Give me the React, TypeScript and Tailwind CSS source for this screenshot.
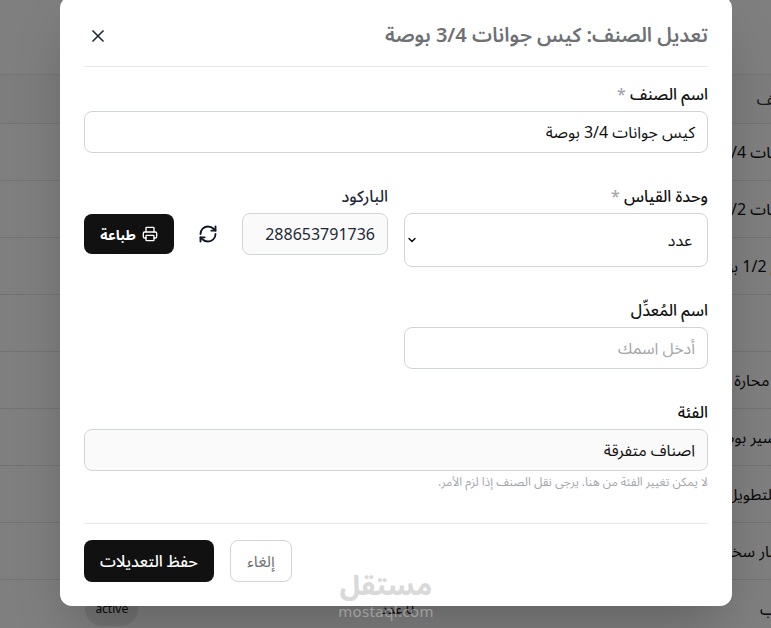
import { X, RefreshCw, Printer, ChevronDown } from "lucide-react";

const rows = [
  { name: "كيس جوانات 3/4 بوصة", mr: "mr-[-62px]" },
  { name: "كيس جوانات 1/2 بوصة", mr: "mr-[-62px]" },
  { name: "كوع 1/2 بوصة", mr: "mr-[-22px]" },
  { name: "", mr: "" },
  { name: "مسطرة محارة 1 متر", mr: "mr-[-48px]" },
  { name: "مواسير بوصة", mr: "mr-[-24px]" },
  { name: "وصلة للتطويل", mr: "mr-[-44px]" },
  { name: "مسمار سخن", mr: "mr-[-30px]" },
];

function Req({ children }: { children: string }) {
  return (
    <label className="mb-[6px] block text-[16px] leading-[22px] font-medium text-[#111111]">
      {children} <span className="text-[#a3a6ab]">*</span>
    </label>
  );
}

export default function App() {
  return (
    <div dir="rtl" className="relative h-[628px] w-[771px] overflow-hidden bg-white font-['Noto_Sans','Noto_Sans_Arabic','DejaVu_Sans',sans-serif]">
      {/* table behind the dialog */}
      <div className="pt-[74px]">
        <div className="flex h-[50px] items-center border-y border-[#e5e7eb] bg-[#fafafa] text-[16px] text-[#333]">
          <span className="mr-[-32px]">الصنف</span>
        </div>
        {rows.map((r, i) => (
          <div key={i} className="flex h-[57px] items-center border-b border-[#e5e7eb] text-[16px] whitespace-nowrap text-[#111111]">
            <span className={r.mr}>{r.name}</span>
          </div>
        ))}
        <div className="flex h-[57px] items-center text-[14px] text-[#111111]">
          <span className="mr-[-5px] w-[10px] text-[16px]">ب</span>
          <span className="mr-[352px]">0 عدد</span>
          <span className="mr-[243px] rounded-full bg-[#e8e8e8] px-[10px] py-[8px] text-[12px] leading-[18px]">active</span>
        </div>
      </div>

      {/* overlay */}
      <div className="absolute inset-0 bg-black/50" />

      {/* dialog */}
      <div className="absolute top-[-4px] left-[60px] h-[610px] w-[672px] rounded-xl bg-white px-[24px] shadow-2xl">
        <div className="flex h-[71px] items-center justify-between border-b border-[#e5e7eb] pt-[8px]">
          <h2 className="text-[20px] font-semibold text-[#6e7174]">تعديل الصنف: كيس جوانات 3/4 بوصة</h2>
          <X className="mt-[2px] ml-[4px] h-[20px] w-[20px] text-[#1f2937]" />
        </div>

        <div className="pt-[16px]">
          <Req>اسم الصنف</Req>
          <div className="flex h-[42px] items-center rounded-lg border border-[#d1d5db] px-[12px] text-[16px] text-[#111111]">
            كيس جوانات 3/4 بوصة
          </div>
        </div>

        <div className="mt-[32px] grid grid-cols-2 gap-[16px]">
          <div>
            <Req>وحدة القياس</Req>
            <div className="flex h-[54px] items-center justify-between rounded-lg border border-[#d1d5db] pr-[15px] pl-[1px] text-[16px] text-[#111111]">
              <span>عدد</span>
              <ChevronDown className="h-[12px] w-[12px] stroke-[3] text-[#111111]" />
            </div>
          </div>
          <div>
            <label className="mb-[6px] block text-[16px] leading-[22px] font-medium text-[#1f2937]">الباركود</label>
            <div className="flex items-start gap-[16px]">
              <div className="flex h-[42px] w-[146px] flex-none items-center rounded-lg border border-[#d1d5db] bg-[#fafafa] px-[12px] text-[16px] text-[#1f2937]">
                288653791736
              </div>
              <div className="flex h-[42px] w-[36px] flex-none items-center justify-center">
                <RefreshCw className="h-[20px] w-[20px] stroke-[2.25] text-[#111827]" />
              </div>
              <button className="mt-[1px] flex h-[40px] w-[90px] flex-none items-center justify-center gap-[6px] rounded-lg bg-[#111111] text-[14px] font-bold text-white">
                <Printer className="h-[16px] w-[16px]" />
                طباعة
              </button>
            </div>
          </div>
        </div>

        <div className="mt-[32px] w-[304px]">
          <label className="mb-[6px] block text-[16px] leading-[22px] font-medium text-[#111111]">اسم المُعدِّل</label>
          <div className="flex h-[42px] items-center rounded-lg border border-[#d1d5db] px-[12px] text-[16px] text-[#a3a6ab]">
            أدخل اسمك
          </div>
        </div>

        <div className="mt-[32px]">
          <label className="mb-[6px] block text-[16px] leading-[22px] font-medium text-[#111111]">الفئة</label>
          <div className="flex h-[42px] items-center rounded-lg border border-[#d1d5db] bg-[#fafafa] px-[12px] text-[16px] text-[#111111]">
            اصناف متفرقة
          </div>
          <p className="mt-[3px] text-[12px] leading-[16px] text-[#a3a6ab]">لا يمكن تغيير الفئة من هنا. يرجى نقل الصنف إذا لزم الأمر.</p>
        </div>

        <div className="mt-[33px] flex gap-[16px] border-t border-[#e5e7eb] pt-[16px]" dir="ltr">
          <button dir="rtl" className="h-[42px] w-[130px] rounded-lg bg-[#111111] text-[16px] font-medium text-white">حفظ التعديلات</button>
          <button dir="rtl" className="h-[42px] w-[62px] rounded-lg border border-[#d1d5db] text-[16px] text-[#6e7174]">إلغاء</button>
        </div>
      </div>

      {/* watermark */}
      <div className="pointer-events-none absolute top-[566px] left-[338px] flex w-[96px] flex-col items-center text-[#c0c0c0] opacity-60">
        <span className="text-[27px] leading-[38px] font-extrabold">مستقل</span>
        <span className="text-[15px] leading-[14px] tracking-wide" dir="ltr">mostaql.com</span>
      </div>
    </div>
  );
}
